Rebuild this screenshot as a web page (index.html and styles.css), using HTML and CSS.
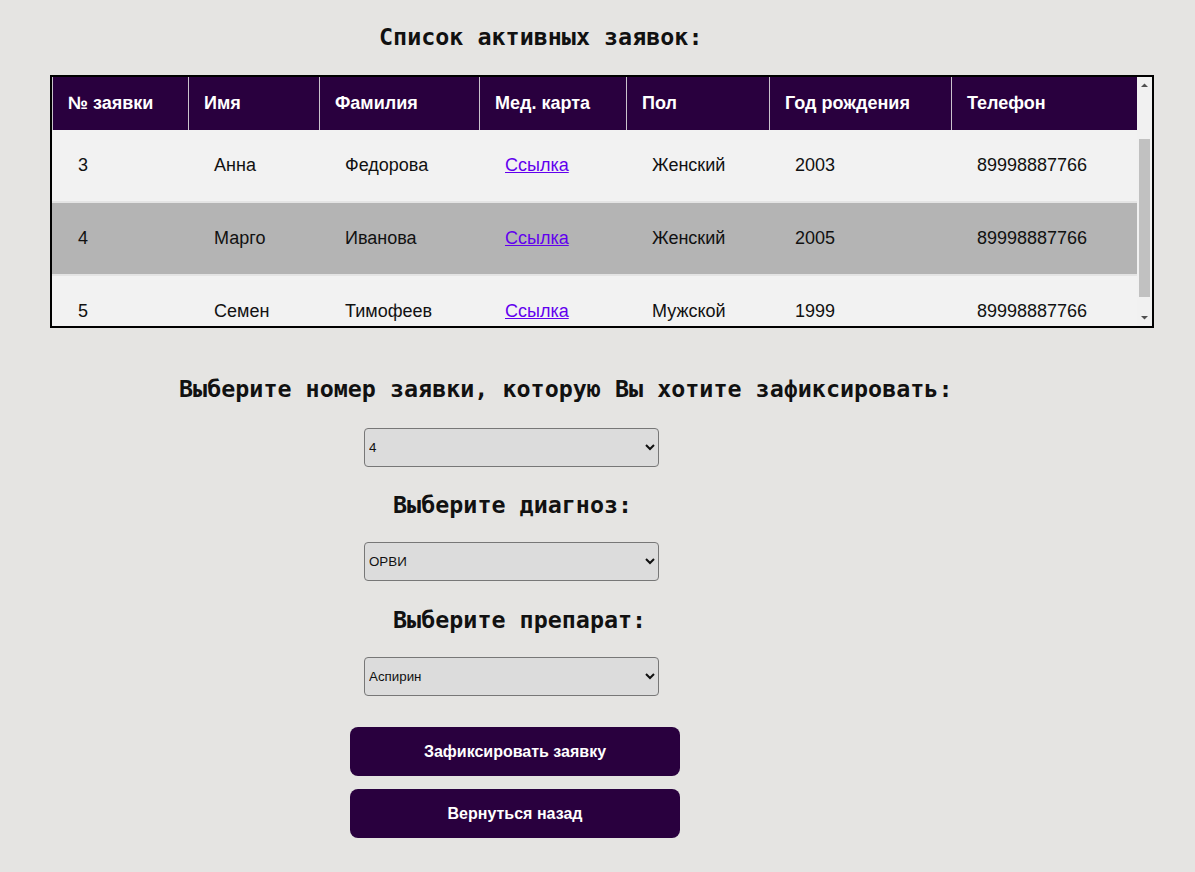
FILE: index.html
```html
<!DOCTYPE html>
<html lang="ru">
<head>
<meta charset="utf-8">
<title>Список активных заявок</title>
<link rel="stylesheet" href="styles.css">
</head>
<body>
<h1 class="title">Список активных заявок:</h1>
<div class="table-wrap">
  <div class="table-scroll">
    <table class="requests">
      <colgroup>
        <col class="c1"><col class="c2"><col class="c3"><col class="c4"><col class="c5"><col class="c6"><col class="c7">
      </colgroup>
      <thead>
        <tr>
          <th>№ заявки</th><th>Имя</th><th>Фамилия</th><th>Мед. карта</th><th>Пол</th><th>Год рождения</th><th>Телефон</th>
        </tr>
      </thead>
      <tbody>
        <tr><td>3</td><td>Анна</td><td>Федорова</td><td><a href="#">Ссылка</a></td><td>Женский</td><td>2003</td><td>89998887766</td></tr>
        <tr class="selected"><td>4</td><td>Марго</td><td>Иванова</td><td><a href="#">Ссылка</a></td><td>Женский</td><td>2005</td><td>89998887766</td></tr>
        <tr class="last"><td>5</td><td>Семен</td><td>Тимофеев</td><td><a href="#">Ссылка</a></td><td>Мужской</td><td>1999</td><td>89998887766</td></tr>
      </tbody>
    </table>
  </div>
  <div class="scrollbar" aria-hidden="true">
    <div class="sb-btn">
      <svg width="15" height="15" viewBox="0 0 15 15"><polygon points="4,10 11,10 7.5,6.5" fill="#505050"/></svg>
    </div>
    <div class="sb-track"><div class="sb-thumb"></div></div>
    <div class="sb-btn">
      <svg width="15" height="15" viewBox="0 0 15 15"><polygon points="4,5 11,5 7.5,8.5" fill="#505050"/></svg>
    </div>
  </div>
</div>

<form class="fix-form">
  <h2 class="heading heading-wide">Выберите номер заявки, которую Вы хотите зафиксировать:</h2>
  <select class="field">
    <option>2</option><option>3</option><option selected>4</option><option>5</option>
  </select>
  <h2 class="heading h-diag">Выберите диагноз:</h2>
  <select class="field">
    <option selected>ОРВИ</option><option>Грипп</option>
  </select>
  <h2 class="heading h-drug">Выберите препарат:</h2>
  <select class="field">
    <option selected>Аспирин</option><option>Парацетамол</option>
  </select>
  <button type="button" class="btn btn-first">Зафиксировать заявку</button>
  <button type="button" class="btn">Вернуться назад</button>
</form>
</body>
</html>
```

FILE: styles.css
```css
html, body {
  margin: 0;
  padding: 0;
}
body {
  background: #e5e4e2;
  font-family: "Liberation Sans", Arial, sans-serif;
  color: #111;
}
.title {
  margin: 0 0 0 379px;
  padding-top: 23px;
  font-family: "DejaVu Sans Mono", monospace;
  font-size: 23.36px;
  line-height: 28px;
  font-weight: bold;
  color: #111;
}
.table-wrap {
  margin: 24px 0 0 50px;
  width: 1100px;
  height: 249px;
  border: 2px solid #000;
  display: flex;
  background: #f2f2f2;
}
.table-scroll {
  width: 1085px;
  height: 249px;
  overflow: hidden;
}
.scrollbar {
  width: 15px;
  height: 249px;
  background: #f1f1f1;
  display: flex;
  flex-direction: column;
}
.sb-btn {
  height: 15px;
  flex: 0 0 15px;
}
.sb-btn svg {
  display: block;
}
.sb-track {
  flex: 1;
}
.sb-thumb {
  margin: 47px 2px 0 2px;
  height: 158px;
  background: #c1c1c1;
}
.requests {
  width: 1085px;
  table-layout: fixed;
  border-collapse: separate;
  border-spacing: 0;
  font-size: 18px;
}
.c1 { width: 136px; }
.c2 { width: 131px; }
.c3 { width: 160px; }
.c4 { width: 147px; }
.c5 { width: 143px; }
.c6 { width: 182px; }
.c7 { width: 186px; }
.requests th {
  background: #29003e;
  color: #fff;
  font-weight: bold;
  text-align: left;
  padding: 16px 0 16px 15px;
  line-height: 21px;
  border-left: 1px solid #c9c2cc;
  white-space: nowrap;
}
.requests td {
  padding: 25px 0 25px 26px;
  line-height: 21px;
  background: #f2f2f2;
  border-bottom: 2px solid #e4e4e4;
  white-space: nowrap;
}
.requests tr.selected td {
  background: #b4b4b4;
}
.requests tr.last td {
  border-bottom: none;
}
.requests a {
  color: #6200ee;
  text-decoration: underline;
}
.fix-form {
  display: flex;
  flex-direction: column;
  align-items: flex-start;
}
.heading {
  margin: 0;
  font-family: "DejaVu Sans Mono", monospace;
  font-size: 23.36px;
  line-height: 28px;
  font-weight: bold;
  color: #111;
  white-space: nowrap;
}
.heading-wide {
  margin: 47px 0 0 179px;
}
.h-diag {
  margin: 24px 0 0 393px;
}
.h-drug {
  margin: 25px 0 0 393px;
}
.field {
  margin: 25px 0 0 364px;
  width: 295px;
  height: 39px;
  box-sizing: border-box;
  border: 1px solid #777;
  border-radius: 4px;
  background-color: #dcdcdc;
  font-family: "Liberation Sans", Arial, sans-serif;
  font-size: 13.33px;
  color: #111;
  padding: 0;
}
.h-diag + .field,
.h-drug + .field {
  margin-top: 23px;
}
.btn {
  margin: 13px 0 0 350px;
  width: 330px;
  height: 49px;
  border: none;
  border-radius: 8px;
  background: #29003e;
  color: #fff;
  font-family: "Liberation Sans", Arial, sans-serif;
  font-size: 16px;
  font-weight: bold;
  cursor: pointer;
}
.btn-first {
  margin-top: 31px;
}
```
